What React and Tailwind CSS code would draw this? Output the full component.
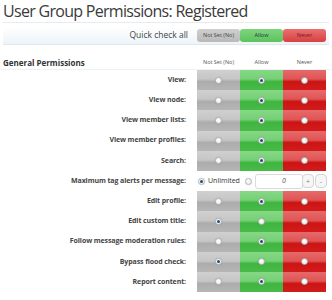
import React from "react";

// Dégradés "glossy" des cellules : moitié haute claire, moitié basse foncée
const CELL = {
  no: "bg-[linear-gradient(to_bottom,#d0d0d0_0%,#c6c6c6_45%,#acacac_58%,#b6b6b6_100%)]",
  allow: "bg-[linear-gradient(to_bottom,#86d886_0%,#76d076_45%,#3fb53f_58%,#48ba48_100%)]",
  never: "bg-[linear-gradient(to_bottom,#e66a6a_0%,#e05555_45%,#cc1414_58%,#d21c1c_100%)]",
};

const ROWS = [
  { label: "View:", value: "allow" },
  { label: "View node:", value: "allow" },
  { label: "View member lists:", value: "allow" },
  { label: "View member profiles:", value: "allow" },
  { label: "Search:", value: "allow" },
  { label: "Maximum tag alerts per message:", special: true },
  { label: "Edit profile:", value: "allow" },
  { label: "Edit custom title:", value: "no" },
  { label: "Follow message moderation rules:", value: "allow" },
  { label: "Bypass flood check:", value: "no" },
  { label: "Report content:", value: "allow" },
];

function Radio({ checked }) {
  return (
    <span className="flex h-[7px] w-[7px] items-center justify-center rounded-full border border-[#b8b8b8] bg-[radial-gradient(circle_at_40%_35%,#ffffff,#e8e8e8)] shadow-[0_0_1px_rgba(0,0,0,0.25)]">
      {checked && <span className="h-[3px] w-[3px] rounded-full bg-[#1d4f7a]" />}
    </span>
  );
}

function PermRow({ row }) {
  return (
    <div className="flex h-[20.2px] items-center">
      <div className="w-[188px] pr-[2px] text-right text-[7px] font-bold tracking-[-0.1px] text-[#444]">{row.label}</div>
      {row.special ? (
        <div className="ml-[9px] flex items-center">
          <span className="ml-[1px]"><Radio checked /></span>
          <span className="ml-[3px] text-[7px] text-[#333]">Unlimited</span>
          <span className="ml-[5px]"><Radio /></span>
          <div className="ml-[3px] flex h-[15px] w-[48px] items-center justify-end rounded-[3px] border border-[#dadada] bg-white pr-[16px] text-[7px] italic text-[#555]">
            0
          </div>
          <button className="ml-[-1px] h-[14px] w-[12px] rounded-[4px] border border-[#d4d4d4] bg-[#f6f6f6] text-[7px] leading-none text-[#888]">+</button>
          <button className="ml-[1px] h-[14px] w-[12px] rounded-[4px] border border-[#d4d4d4] bg-[#f6f6f6] text-[7px] leading-none text-[#888]">-</button>
        </div>
      ) : (
        <div className="ml-[9px] flex h-full">
          {["no", "allow", "never"].map((k) => (
            <div key={k} className={`flex h-full w-[43px] items-center justify-center ${CELL[k]}`}>
              <Radio checked={row.value === k} />
            </div>
          ))}
        </div>
      )}
    </div>
  );
}

export default function App() {
  return (
    <div className="h-[300px] w-[332px] overflow-hidden bg-white font-['Open_Sans',sans-serif] text-[#333]">
      {/* ── Titre ─────────────────────────────────────────────── */}
      <h1 className="h-[22px] pl-[3px] pt-[1px] text-[16px] leading-[20px] tracking-[-0.7px] text-[#3a3a3a]">
        User Group Permissions: Registered
      </h1>
      <div className="mx-[3px] border-t border-[#e6ecf0]" />

      {/* ── Barre "Quick check all" ───────────────────────────── */}
      <div className="mx-[3px] mt-[4px] flex h-[18px] items-center justify-end border-b border-[#dfe8ee] bg-[linear-gradient(to_bottom,#ffffff,#edf4f9)] pr-[3px]">
        <span className="mr-[9px] text-[8.5px] text-[#444]">Quick check all</span>
        <button className="h-[13px] w-[43px] rounded-[3px] bg-[linear-gradient(to_bottom,#cfcfcf,#b9b9b9)] text-[5.5px] text-[#444]">Not Set (No)</button>
        <button className="h-[13px] w-[43px] rounded-[3px] bg-[linear-gradient(to_bottom,#7fd47f,#5cc35c)] text-[5.5px] text-[#234]">Allow</button>
        <button className="h-[13px] w-[43px] rounded-[3px] bg-[linear-gradient(to_bottom,#ea7070,#d84040)] text-[5.5px] text-[#622]">Never</button>
      </div>

      {/* ── En-tête de section ───────────────────────────────── */}
      <div className="mt-[11px] flex h-[14px] items-center border-b border-[#eef2f4] px-[3px]">
        <span className="w-[194px] text-[8px] font-bold text-[#333]">General Permissions</span>
        <span className="w-[43px] text-center text-[5.5px] text-[#555]">Not Set (No)</span>
        <span className="w-[43px] text-center text-[5.5px] text-[#555]">Allow</span>
        <span className="w-[43px] text-center text-[5.5px] text-[#555]">Never</span>
      </div>

      {/* ── Lignes de permissions ────────────────────────────── */}
      <div>
        {ROWS.map((r) => (
          <PermRow key={r.label} row={r} />
        ))}
      </div>
    </div>
  );
}
